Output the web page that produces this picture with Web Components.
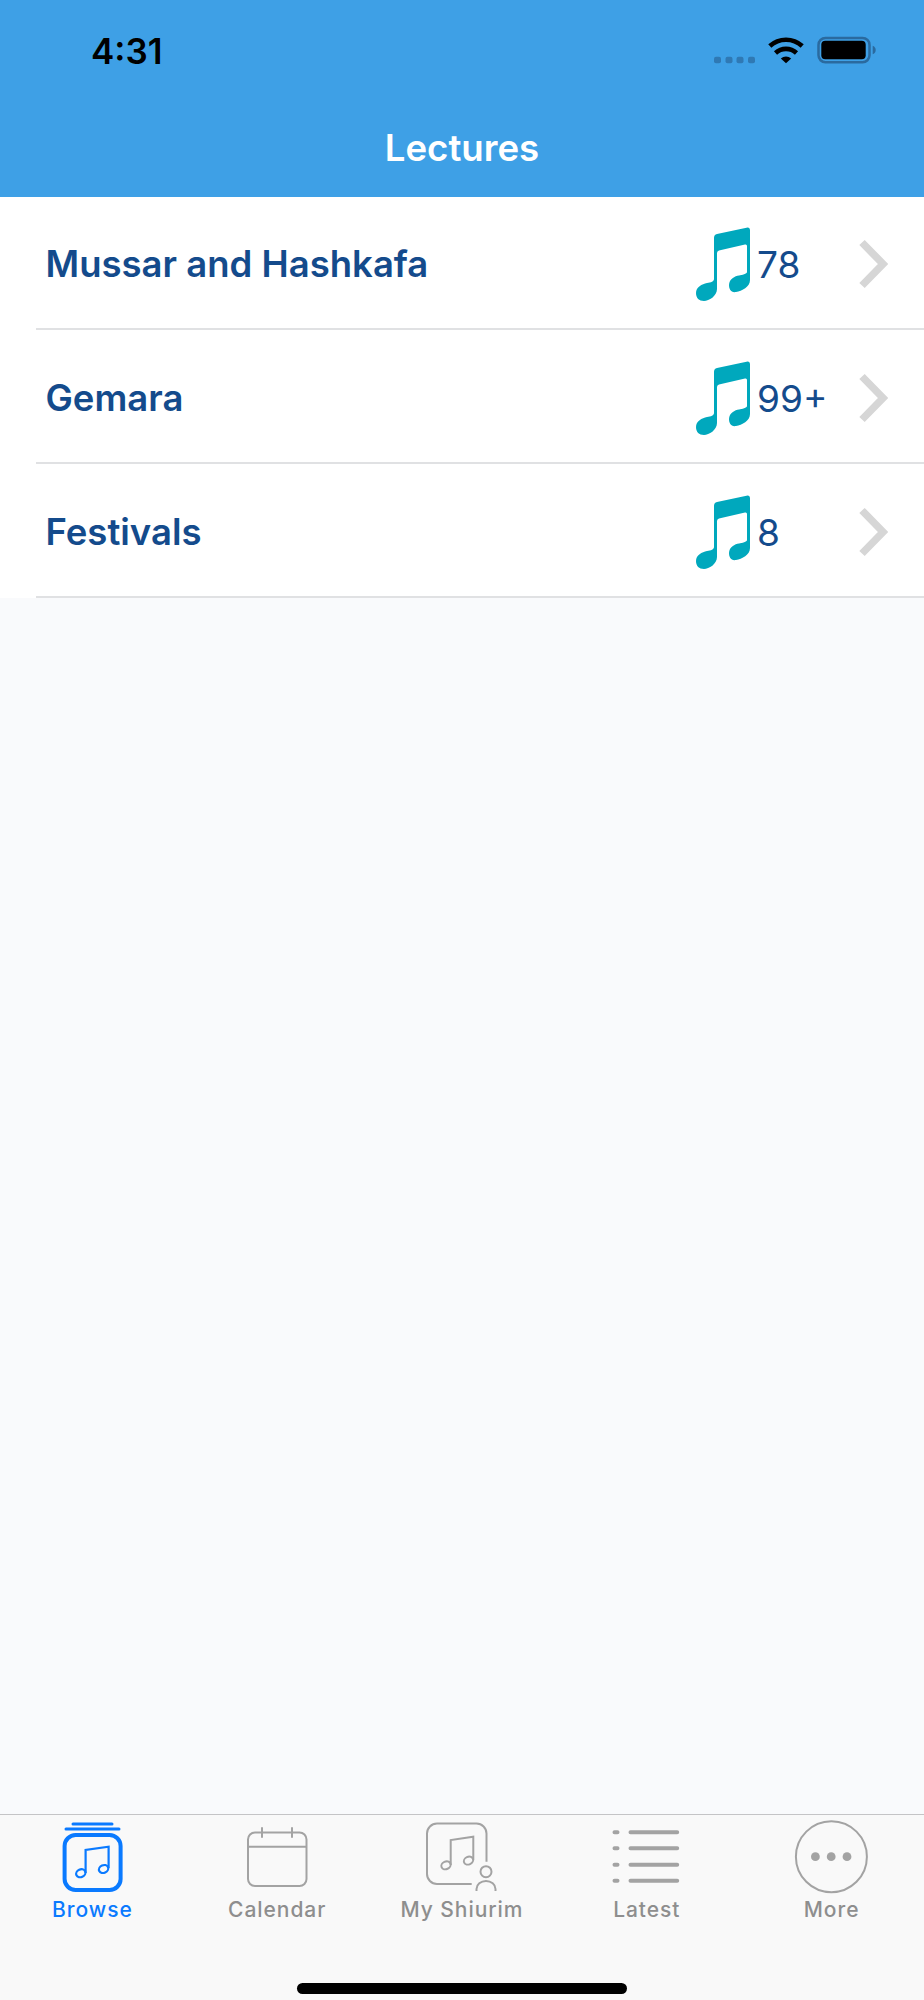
<!DOCTYPE html>
<html lang="en">
<head>
<meta charset="utf-8">
<title>Lectures</title>
<style>
  html, body { margin: 0; padding: 0; background: #f9fafc; }
  body { font-family: Inter, "Liberation Sans", sans-serif; }
</style>
</head>
<body>
<app-screen>
  <app-header slot="header" title="Lectures" time="4:31"></app-header>
  <lecture-list>
    <lecture-row count="78">Mussar and Hashkafa</lecture-row>
    <lecture-row count="99+">Gemara</lecture-row>
    <lecture-row count="8">Festivals</lecture-row>
  </lecture-list>
  <tab-bar slot="tabs">
    <tab-item active>
      <svg slot="icon" width="80" height="76" viewBox="0 0 80 76" fill="none" stroke="currentColor">
        <path d="M21 6H60M14 11H67" stroke-width="3" stroke-linecap="round"/>
        <rect x="12.6" y="17" width="56" height="55" rx="11" stroke-width="4"/>
        <path d="M33.6 55V32L56.6 28.7V50" stroke-width="2.2"/>
        <ellipse cx="28.8" cy="55.2" rx="4.8" ry="3.8" transform="rotate(-25 28.8 55.2)" stroke-width="2.2"/>
        <ellipse cx="51.6" cy="51" rx="4.8" ry="3.8" transform="rotate(-25 51.6 51)" stroke-width="2.2"/>
      </svg>
      Browse
    </tab-item>
    <tab-item>
      <svg slot="icon" width="80" height="76" viewBox="0 0 80 76" fill="none" stroke="currentColor" stroke-width="2">
        <rect x="11" y="14.5" width="58.5" height="53.5" rx="7"/>
        <path d="M11 28.7H69.5M25 9.3V19.7M55 9.3V19.7"/>
      </svg>
      Calendar
    </tab-item>
    <tab-item>
      <svg slot="icon" width="80" height="76" viewBox="0 0 80 76" fill="none" stroke="currentColor" stroke-width="2">
        <path d="M64.5 43.7V15.5A10 10 0 0 0 54.5 5.5H15A10 10 0 0 0 5 15.5V56A10 10 0 0 0 15 66H49.7"/>
        <path d="M28.7 47V22L51.3 18.7V42"/>
        <ellipse cx="24" cy="47.3" rx="4.8" ry="3.8" transform="rotate(-25 24 47.3)"/>
        <ellipse cx="46.5" cy="42.6" rx="4.8" ry="3.8" transform="rotate(-25 46.5 42.6)"/>
        <circle cx="64" cy="53.7" r="5.5"/>
        <path d="M54.5 73V71A9.5 8 0 0 1 73.5 71V73"/>
      </svg>
      My Shiurim
    </tab-item>
    <tab-item>
      <svg slot="icon" width="80" height="76" viewBox="0 0 80 76" fill="none" stroke="currentColor" stroke-width="4" stroke-linecap="round">
        <path d="M7.5 14.3H10.5M23.5 14.3H70.2M7.5 30.3H10.5M23.5 30.3H70.2M7.5 46.7H10.5M23.5 46.7H70.2M7.5 62.7H10.5M23.5 62.7H70.2"/>
      </svg>
      Latest
    </tab-item>
    <tab-item>
      <svg slot="icon" width="80" height="76" viewBox="0 0 80 76" fill="none">
        <circle cx="39.4" cy="38.7" r="35.5" stroke="currentColor" stroke-width="2"/>
        <circle cx="23.4" cy="38.7" r="4.4" fill="currentColor"/>
        <circle cx="39.2" cy="38.7" r="4.4" fill="currentColor"/>
        <circle cx="55" cy="38.7" r="4.4" fill="currentColor"/>
      </svg>
      More
    </tab-item>
  </tab-bar>
</app-screen>

<script>
// Page frame: header on top, list in the middle, tabs stuck to the bottom
class AppScreen extends HTMLElement {
  constructor () {
    super();
    const root = this.attachShadow({ mode: 'open' });
    root.innerHTML = `
      <style>
        :host { display: flex; flex-direction: column; height: 2000px; background: #f9fafc; }
        main { flex: 1; }
      </style>
      <slot name="header"></slot>
      <main><slot></slot></main>
      <slot name="tabs"></slot>`;
  }
}

// Blue bar with the phone status line and the page title
class AppHeader extends HTMLElement {
  constructor () {
    super();
    const root = this.attachShadow({ mode: 'open' });
    root.innerHTML = `
      <style>
        :host { display: block; height: 197px; background: #3ea0e6; }
        .status { display: flex; justify-content: space-between; align-items: center; height: 28px; padding: 36px 48px 0 91px; }
        .time { font-size: 35px; font-weight: 600; line-height: 28px; color: #000; position: relative; top: 1px; }
        h1 { margin: 0; padding-top: 66px; font-size: 36.6px; line-height: 36px; font-weight: 600; color: #fff; text-align: center; }
      </style>
      <div class="status">
        <span class="time"></span>
        <svg width="162" height="28" viewBox="0 0 162 28" fill="none">
          <rect x="0" y="20.7" width="7" height="6.6" rx="2" fill="#2f79b4"/>
          <rect x="11.5" y="20.7" width="7" height="6.6" rx="2" fill="#2f79b4"/>
          <rect x="22.5" y="20.7" width="7" height="6.6" rx="2" fill="#2f79b4"/>
          <rect x="34" y="20.7" width="7" height="6.6" rx="2" fill="#2f79b4"/>
          <path d="M55.8 10A24 24 0 0 1 88.2 10M61.5 17A15.5 15.5 0 0 1 82.5 17" stroke="#000" stroke-width="4.6"/>
          <path d="M72 27.3L66.8 22.5A8 8 0 0 1 77.2 22.5Z" fill="#000"/>
          <rect x="104.5" y="1.9" width="51" height="24.4" rx="7" stroke="#2a6a9f" stroke-width="2.5"/>
          <rect x="107.3" y="4.7" width="44.4" height="18.6" rx="4" fill="#000"/>
          <path d="M158.7 9.7C161 10.5 161.7 12.5 161.7 14C161.7 15.5 161 17.5 158.7 18.3Z" fill="#2a6a9f"/>
        </svg>
      </div>
      <h1></h1>`;
    root.querySelector('.time').textContent = this.getAttribute('time');
    root.querySelector('h1').textContent = this.getAttribute('title');
  }
}

class LectureList extends HTMLElement {
  constructor () {
    super();
    const root = this.attachShadow({ mode: 'open' });
    root.innerHTML = `
      <style>
        :host { display: block; background: #fff; }
      </style>
      <slot></slot>`;
  }
}

// One list line: title, music note, number of shiurim, chevron
class LectureRow extends HTMLElement {
  constructor () {
    super();
    const root = this.attachShadow({ mode: 'open' });
    root.innerHTML = `
      <style>
        :host { display: block; margin-left: 36px; }
        .line {
          display: grid; grid-template-columns: 1fr 54px 109px 29px; align-items: center;
          box-sizing: border-box; height: 134px; padding: 4px 36px 0 9.5px;
          border-bottom: 2px solid #e0e1e3;
        }
        /* the first line sits 1px tighter under the header */
        :host(:first-child) .line { height: 133px; padding-top: 3px; }
        .title { font-size: 36.5px; font-weight: 600; color: #144b8c; }
        .count { font-size: 37px; font-weight: 400; color: #144b8c; padding-left: 7px; }
        svg { display: block; }
      </style>
      <div class="line">
        <span class="title"><slot></slot></span>
        <svg width="54" height="74" viewBox="0 0 54 74">
          <path fill="#00a8bd" d="M18 11Q18 7.5 21 7L50.5.7Q54 0 54 3.5V53C54 60 46 64 40 65C35 66 33 62 33 58C33 52 39 49 43 48.5C46 48 51 47 51 45V19Q51 17 49 17.5L23 23.5Q21 24 21 26V62C21 69 13 74 8 74C3 74 0 71 0 66C0 60 6 57 11 56C15 55.5 18 54.5 18 52Z"/>
        </svg>
        <span class="count"></span>
        <svg width="29" height="50" viewBox="0 0 29 50" fill="none">
          <path d="M3 3.5L24 25L3 46.5" stroke="#d6d6d6" stroke-width="7.5"/>
        </svg>
      </div>`;
    root.querySelector('.count').textContent = this.getAttribute('count');
  }
}

class TabBar extends HTMLElement {
  constructor () {
    super();
    const root = this.attachShadow({ mode: 'open' });
    root.innerHTML = `
      <style>
        :host { display: block; height: 186px; box-sizing: border-box; background: #f9f9f9; border-top: 1.5px solid #c4c4c6; }
        .tabs { display: grid; grid-template-columns: repeat(5, 1fr); padding-top: 3px; }
        .home { width: 330px; height: 11px; margin: 60.5px auto 0; background: #000; border-radius: 6px; }
      </style>
      <div class="tabs"><slot></slot></div>
      <div class="home"></div>`;
  }
}

class TabItem extends HTMLElement {
  constructor () {
    super();
    const root = this.attachShadow({ mode: 'open' });
    root.innerHTML = `
      <style>
        :host { display: flex; flex-direction: column; align-items: center; color: #a3a3a3; }
        :host([active]) { color: #0a7aff; }
        .label { margin-top: 2.5px; font-size: 21px; line-height: 26px; font-weight: 450; letter-spacing: .95px; white-space: nowrap; color: #8e8e8e; }
        :host([active]) .label { color: #0a7aff; }
      </style>
      <slot name="icon"></slot>
      <span class="label"><slot></slot></span>`;
  }
}

customElements.define('app-screen', AppScreen);
customElements.define('app-header', AppHeader);
customElements.define('lecture-list', LectureList);
customElements.define('lecture-row', LectureRow);
customElements.define('tab-bar', TabBar);
customElements.define('tab-item', TabItem);
</script>
</body>
</html>
